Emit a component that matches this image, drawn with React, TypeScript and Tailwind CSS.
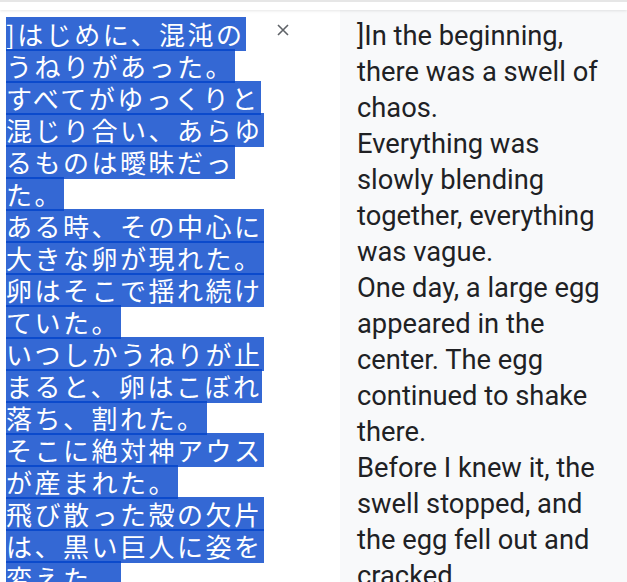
import React from "react";

const jp = [
  "]はじめに、混沌の",
  "うねりがあった。",
  "すべてがゆっくりと",
  "混じり合い、あらゆ",
  "るものは曖昧だっ",
  "た。",
  "ある時、その中心に",
  "大きな卵が現れた。",
  "卵はそこで揺れ続け",
  "ていた。",
  "いつしかうねりが止",
  "まると、卵はこぼれ",
  "落ち、割れた。",
  "そこに絶対神アウス",
  "が産まれた。",
  "飛び散った殻の欠片",
  "は、黒い巨人に姿を",
  "変えた。",
];

const en = [
  "]In the beginning,",
  "there was a swell of",
  "chaos.",
  "Everything was",
  "slowly blending",
  "together, everything",
  "was vague.",
  "One day, a large egg",
  "appeared in the",
  "center. The egg",
  "continued to shake",
  "there.",
  "Before I knew it, the",
  "swell stopped, and",
  "the egg fell out and",
  "cracked",
];

export default function App() {
  return (
    <div className="w-full h-[582px] overflow-hidden flex flex-col bg-white">
      <div className="h-[10px] shrink-0 bg-white border-t-[2px] border-[#e6e6e6] shadow-[0_1px_3px_rgba(0,0,0,0.10)] relative z-10" />
      <div className="flex flex-1 min-h-0">
        <div className="relative w-[340px] shrink-0 bg-white pt-[8px] pl-[6px]">
          <div
            className="text-[26px] leading-[32px] tracking-[2.5px]"
            style={{ fontFamily: '"Noto Sans CJK JP", "Noto Sans", sans-serif' }}
          >
            {jp.map((l, i) => (
              <div key={i} className="h-[32px] whitespace-nowrap">
                <span className="relative inline-block h-[32px] align-top pr-[1px]">
                  <span className="absolute inset-x-0 -top-[1px] -bottom-[1px] bg-[rgba(1,66,201,0.8)]" />
                  <span className="relative text-white">{l}</span>
                </span>
              </div>
            ))}
          </div>
          <button className="absolute left-[277px] top-[14px] w-[12px] h-[12px] p-0">
            <svg width="12" height="12" viewBox="0 0 12 12" fill="none">
              <path d="M1 1L11 11M11 1L1 11" stroke="#5f6368" strokeWidth="1.6" />
            </svg>
          </button>
        </div>
        <div
          className="flex-1 bg-[#f8f9fa] pt-[8px] pl-[17px] text-[27.3px] leading-[36px] text-[#202124]"
          style={{ fontFamily: 'Roboto, "Liberation Sans", sans-serif' }}
        >
          {en.map((l, i) => (
            <div key={i} className="whitespace-nowrap">
              {l}
            </div>
          ))}
        </div>
      </div>
    </div>
  );
}
